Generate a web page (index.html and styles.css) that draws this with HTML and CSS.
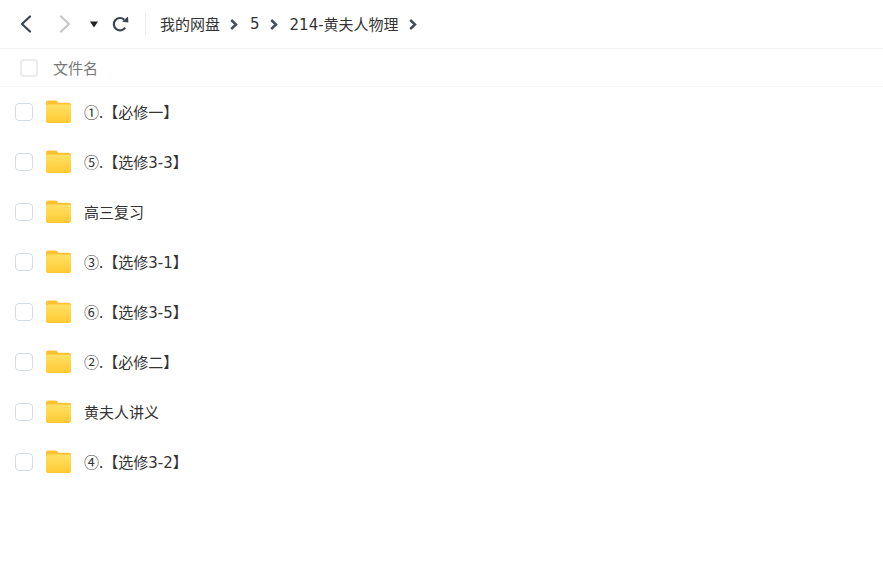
FILE: index.html
```html
<!doctype html>
<html lang="zh-CN">
  <head>
    <meta charset="UTF-8" />
    <title>我的网盘</title>
    <link rel="stylesheet" href="styles.css">
  </head>

  <body>
    <div class="toolbar">
      <svg class="nav-icon back" width="12" height="18" viewBox="0 0 12 18"><path d="M10 1.5 L2 9 L10 16.5" /></svg>
      <svg class="nav-icon forward" width="12" height="18" viewBox="0 0 12 18"><path d="M2 1.5 L10 9 L2 16.5" /></svg>
      <svg class="caret" width="8" height="7" viewBox="0 0 8 7"><path d="M0 0.5 H8 L4 6.5 Z" /></svg>
      <svg class="refresh" width="17" height="16" viewBox="0 0 17 16">
        <path class="refresh-arc" d="M13.2 11.6 A6.2 6.2 0 1 1 12.2 3.6" />
        <path class="refresh-head" d="M10 5.8 L16.4 6.4 L16 0.4 Z" />
      </svg>
      <div class="divider"></div>
      <div class="crumbs">
        <span>我的网盘</span>
        <svg class="sep" width="8" height="11" viewBox="0 0 8 11"><path d="M1.2 1 L6 5.5 L1.2 10" /></svg>
        <span class="latin">5</span>
        <svg class="sep" width="8" height="11" viewBox="0 0 8 11"><path d="M1.2 1 L6 5.5 L1.2 10" /></svg>
        <span><span class="latin">214-</span>黄夫人物理</span>
        <svg class="sep" width="8" height="11" viewBox="0 0 8 11"><path d="M1.2 1 L6 5.5 L1.2 10" /></svg>
      </div>
    </div>

    <div class="list-head">
      <span class="check head-check"></span>
      <span class="head-name">文件名</span>
    </div>

    <div class="rows">
      <div class="row">
        <span class="check"></span>
        <svg class="folder" width="27" height="24" viewBox="0 0 27 24"><use href="#folder" /></svg>
        <span class="name">①.【必修一】</span>
      </div>
      <div class="row">
        <span class="check"></span>
        <svg class="folder" width="27" height="24" viewBox="0 0 27 24"><use href="#folder" /></svg>
        <span class="name">⑤.【选修<span class="latin">3-3</span>】</span>
      </div>
      <div class="row">
        <span class="check"></span>
        <svg class="folder" width="27" height="24" viewBox="0 0 27 24"><use href="#folder" /></svg>
        <span class="name">高三复习</span>
      </div>
      <div class="row">
        <span class="check"></span>
        <svg class="folder" width="27" height="24" viewBox="0 0 27 24"><use href="#folder" /></svg>
        <span class="name">③.【选修<span class="latin">3-1</span>】</span>
      </div>
      <div class="row">
        <span class="check"></span>
        <svg class="folder" width="27" height="24" viewBox="0 0 27 24"><use href="#folder" /></svg>
        <span class="name">⑥.【选修<span class="latin">3-5</span>】</span>
      </div>
      <div class="row">
        <span class="check"></span>
        <svg class="folder" width="27" height="24" viewBox="0 0 27 24"><use href="#folder" /></svg>
        <span class="name">②.【必修二】</span>
      </div>
      <div class="row">
        <span class="check"></span>
        <svg class="folder" width="27" height="24" viewBox="0 0 27 24"><use href="#folder" /></svg>
        <span class="name">黄夫人讲义</span>
      </div>
      <div class="row">
        <span class="check"></span>
        <svg class="folder" width="27" height="24" viewBox="0 0 27 24"><use href="#folder" /></svg>
        <span class="name">④.【选修<span class="latin">3-2</span>】</span>
      </div>
    </div>

    <svg class="defs" width="0" height="0">
      <defs>
        <linearGradient id="folderFill" x1="0" y1="0" x2="0" y2="1">
          <stop offset="0" stop-color="#ffe064" />
          <stop offset="1" stop-color="#ffcb33" />
        </linearGradient>
        <symbol id="folder" viewBox="0 0 27 24">
          <path d="M1 2 Q1 0.4 3 0.4 H10 Q11.5 0.4 12.5 1.6 L13.4 2.8 H24 Q26 2.8 26 4.8 V21 Q26 23 24 23 H3 Q1 23 1 21 Z" fill="#ffc233" />
          <path d="M1 6.2 Q1 4.6 3 4.6 H24 Q26 4.6 26 6.6 V20.6 Q26 22.4 24 22.4 H3 Q1 22.4 1 20.6 Z" fill="url(#folderFill)" />
        </symbol>
      </defs>
    </svg>
  </body>
</html>
```

FILE: styles.css
```css
body {
  margin: 0;
  background-color: #fff;
  color: #333;
  font-family: "Noto Sans CJK SC", sans-serif;
  font-size: 15px;
  line-height: 20px;
}

.latin {
  font-family: "DejaVu Sans", sans-serif;
  font-size: 15px;
  line-height: 1;
}

.toolbar {
  display: flex;
  align-items: center;
  height: 48px;
  padding-left: 20px;
  border-bottom: 1px solid #f2f2f2;
}

.nav-icon path {
  fill: none;
  stroke-width: 2.2;
  stroke-linecap: round;
  stroke-linejoin: round;
}

.back path {
  stroke: #3c4450;
}

.forward {
  margin-left: 27px;
}

.forward path {
  stroke: #c4c6c9;
}

.caret {
  margin-left: 19px;
  fill: #222;
}

.refresh {
  margin-left: 14px;
}

.refresh-arc {
  fill: none;
  stroke: #3c4450;
  stroke-width: 2.2;
}

.refresh-head {
  fill: #3c4450;
}

.divider {
  width: 1px;
  height: 22px;
  margin-left: 16px;
  background-color: #eee;
}

.crumbs {
  display: flex;
  align-items: center;
  margin-left: 14px;
  color: #333;
}

.sep {
  margin: 0 12px 0 10px;
}

.sep path {
  fill: none;
  stroke: #454c58;
  stroke-width: 2.4;
}

.list-head {
  display: flex;
  align-items: center;
  height: 37px;
  border-bottom: 1px solid #f5f5f5;
  color: #777;
}

.check {
  box-sizing: border-box;
  width: 18px;
  height: 18px;
  margin-left: 15px;
  border: 1px solid #d5dce6;
  border-radius: 4px;
  background-color: #fff;
}

.head-check {
  margin-left: 20px;
  border: 2px solid #ececec;
}

.head-name {
  margin-left: 15px;
}

.rows {
  display: flex;
  flex-direction: column;
}

.row {
  display: flex;
  align-items: center;
  height: 50px;
}

.folder {
  margin-left: 12px;
}

.name {
  margin-left: 12px;
  margin-bottom: 1px;
  color: #333;
}

.defs {
  position: absolute;
}
```
